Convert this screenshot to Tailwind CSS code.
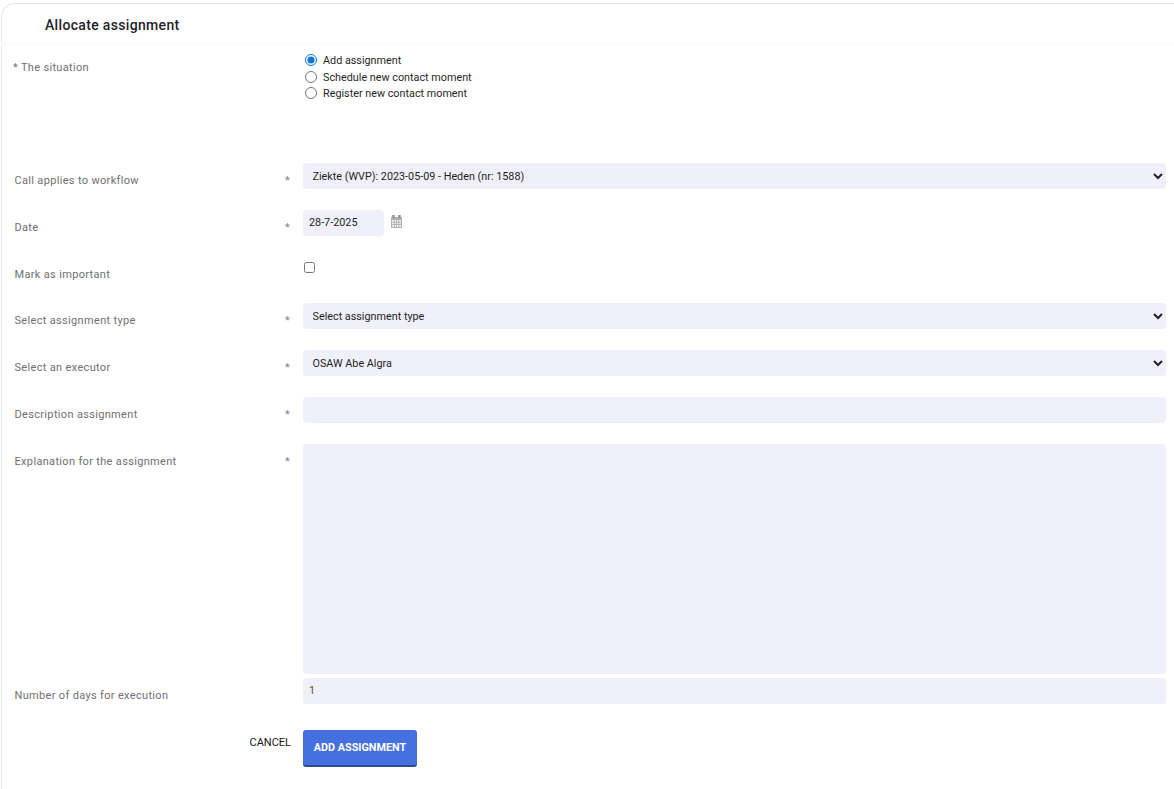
<!DOCTYPE html>
<html lang="en">

<head>
  <meta charset="UTF-8" />
  <meta name="viewport" content="width=device-width, initial-scale=1" />
  <title>Allocate assignment</title>
  <script src="https://cdn.jsdelivr.net/npm/@tailwindcss/browser@4"></script>
</head>

<body class="bg-white h-[789px] overflow-hidden font-['Roboto',sans-serif] text-[10.8px] text-[#1f1f24]">
  <div class="pt-[3px] pl-px h-full">
    <div class="h-full border-l border-t border-[#e6e6ef] rounded-tl-[14px] pl-px">

      <!-- Header -->
      <div class="h-[38px] pl-[42px] pt-[5px] flex items-center">
        <h1 class="text-[14px] font-medium tracking-[0.33px] text-[#22222a]">Allocate assignment</h1>
      </div>
      <div class="h-[4px] bg-[#fdfcfe] -ml-[2px]"></div>

      <!-- Situation -->
      <div class="flex h-[117px]">
        <div class="w-[300px] pl-[10px] pt-[15px] text-[#6f6f73] text-[11px] tracking-[0.33px] leading-[14px]">* The situation</div>
        <div class="flex flex-col pt-[7px] pl-[2px]">
          <label class="flex items-center gap-[6px] h-[16.5px]"><input type="radio" name="situation" checked class="w-[12px] h-[12px] m-0 mb-[2px] accent-[#0a78d8]" />Add assignment</label>
          <label class="flex items-center gap-[6px] h-[16.5px]"><input type="radio" name="situation" class="w-[12px] h-[12px] m-0 mb-[2px]" />Schedule new contact moment</label>
          <label class="flex items-center gap-[6px] h-[16.5px]"><input type="radio" name="situation" class="w-[12px] h-[12px] m-0 mb-[2px]" />Register new contact moment</label>
        </div>
      </div>

      <!-- Form rows -->
      <div class="flex flex-col">
        <div class="flex h-[26px] mb-[21px]">
          <div class="w-[270px] pl-[11.5px] pt-[11px] text-[#6f6f73] text-[11px] tracking-[0.33px] leading-[14px]">Call applies to workflow</div>
          <div class="w-[30px] pl-[12px] pt-[11px] text-[#8a7f78] text-[11px] leading-[14px]">*</div>
          <select class="w-[863px] h-[26px] bg-[#f0f0fa] rounded-[4px] pl-[5.500px] text-[10.8px] text-[#1f1f24]">
            <option>Ziekte (WVP): 2023-05-09 - Heden (nr: 1588)</option>
          </select>
        </div>

        <div class="flex h-[26px] mb-[21px]">
          <div class="w-[270px] pl-[11.5px] pt-[11px] text-[#6f6f73] text-[11px] tracking-[0.33px] leading-[14px]">Date</div>
          <div class="w-[30px] pl-[12px] pt-[11px] text-[#8a7f78] text-[11px] leading-[14px]">*</div>
          <input type="text" value="28-7-2025" class="w-[81px] h-[26px] bg-[#f0f0fa] rounded-[4px] px-[6px] pb-[2px] text-[10.8px] text-[#1f1f24]" />
          <svg class="ml-[6px] mt-[4px]" width="13" height="15" viewBox="0 0 13 15" fill="none">
            <path d="M1 3h11v11H1z" fill="#b0b0b0" />
            <path d="M3.500 1v3M9.500 1v3" stroke="#929292" stroke-width="2.500" />
            <path d="M2 6h9v7H2z" fill="#f2f2f2" />
            <path d="M2 8.300h9M2 10.600h9M4.250 6v7M6.500 6v7M8.750 6v7" stroke="#a8a8a8" stroke-width="0.8" />
          </svg>
        </div>

        <div class="flex h-[26px] mb-[20px]">
          <div class="w-[300px] pl-[11.5px] pt-[11px] text-[#6f6f73] text-[11px] tracking-[0.33px] leading-[14px]">Mark as important</div>
          <input type="checkbox" class="w-[11px] h-[11px] m-0 mt-[5px] ml-px" />
        </div>

        <div class="flex h-[26px] mb-[21px]">
          <div class="w-[270px] pl-[11.5px] pt-[11px] text-[#6f6f73] text-[11px] tracking-[0.33px] leading-[14px]">Select assignment type</div>
          <div class="w-[30px] pl-[12px] pt-[11px] text-[#8a7f78] text-[11px] leading-[14px]">*</div>
          <select class="w-[863px] h-[26px] bg-[#f0f0fa] rounded-[4px] pl-[5.500px] text-[10.8px] text-[#1f1f24]">
            <option>Select assignment type</option>
          </select>
        </div>

        <div class="flex h-[26px] mb-[21px]">
          <div class="w-[270px] pl-[11.5px] pt-[11px] text-[#6f6f73] text-[11px] tracking-[0.33px] leading-[14px]">Select an executor</div>
          <div class="w-[30px] pl-[12px] pt-[11px] text-[#8a7f78] text-[11px] leading-[14px]">*</div>
          <select class="w-[863px] h-[26px] bg-[#f0f0fa] rounded-[4px] pl-[5.500px] text-[10.8px] text-[#1f1f24]">
            <option>OSAW Abe Algra</option>
          </select>
        </div>

        <div class="flex h-[26px] mb-[21px]">
          <div class="w-[270px] pl-[11.5px] pt-[11px] text-[#6f6f73] text-[11px] tracking-[0.33px] leading-[14px]">Description assignment</div>
          <div class="w-[30px] pl-[12px] pt-[11px] text-[#8a7f78] text-[11px] leading-[14px]">*</div>
          <input type="text" class="w-[863px] h-[26px] bg-[#f0f0fa] rounded-[4px] px-[6px]" />
        </div>

        <div class="flex h-[230px]">
          <div class="w-[270px] pl-[11.5px] pt-[11px] text-[#6f6f73] text-[11px] tracking-[0.33px] leading-[14px]">Explanation for the assignment</div>
          <div class="w-[30px] pl-[12px] pt-[11px] text-[#8a7f78] text-[11px] leading-[14px]">*</div>
          <textarea class="w-[863px] h-[230px] bg-[#f0f0fa] rounded-[4px] px-[6px] resize-none"></textarea>
        </div>
      </div>

      <div class="flex h-[26px] mt-[4px]">
        <div class="w-[300px] pl-[11.5px] pt-[11px] text-[#6f6f73] text-[11px] tracking-[0.33px] leading-[14px]">Number of days for execution</div>
        <input type="text" value="1" class="w-[863px] h-[26px] bg-[#f0f0fa] rounded-[4px] px-[6px] pb-[2px] text-[10.8px] text-[#6b4a2a]" />
      </div>

      <!-- Buttons -->
      <div class="flex mt-[26px]">
        <div class="w-[288px] text-right pt-[6px] text-[11px] leading-[14px] text-[#15151a]">CANCEL</div>
        <button class="ml-[12px] w-[114px] h-[37px] pt-[2px] bg-[#4570e0] rounded-[3px] border-b-2 border-[#2c4a94] text-white text-[10.8px] font-bold">ADD ASSIGNMENT</button>
      </div>
    </div>
  </div>
</body>

</html>
